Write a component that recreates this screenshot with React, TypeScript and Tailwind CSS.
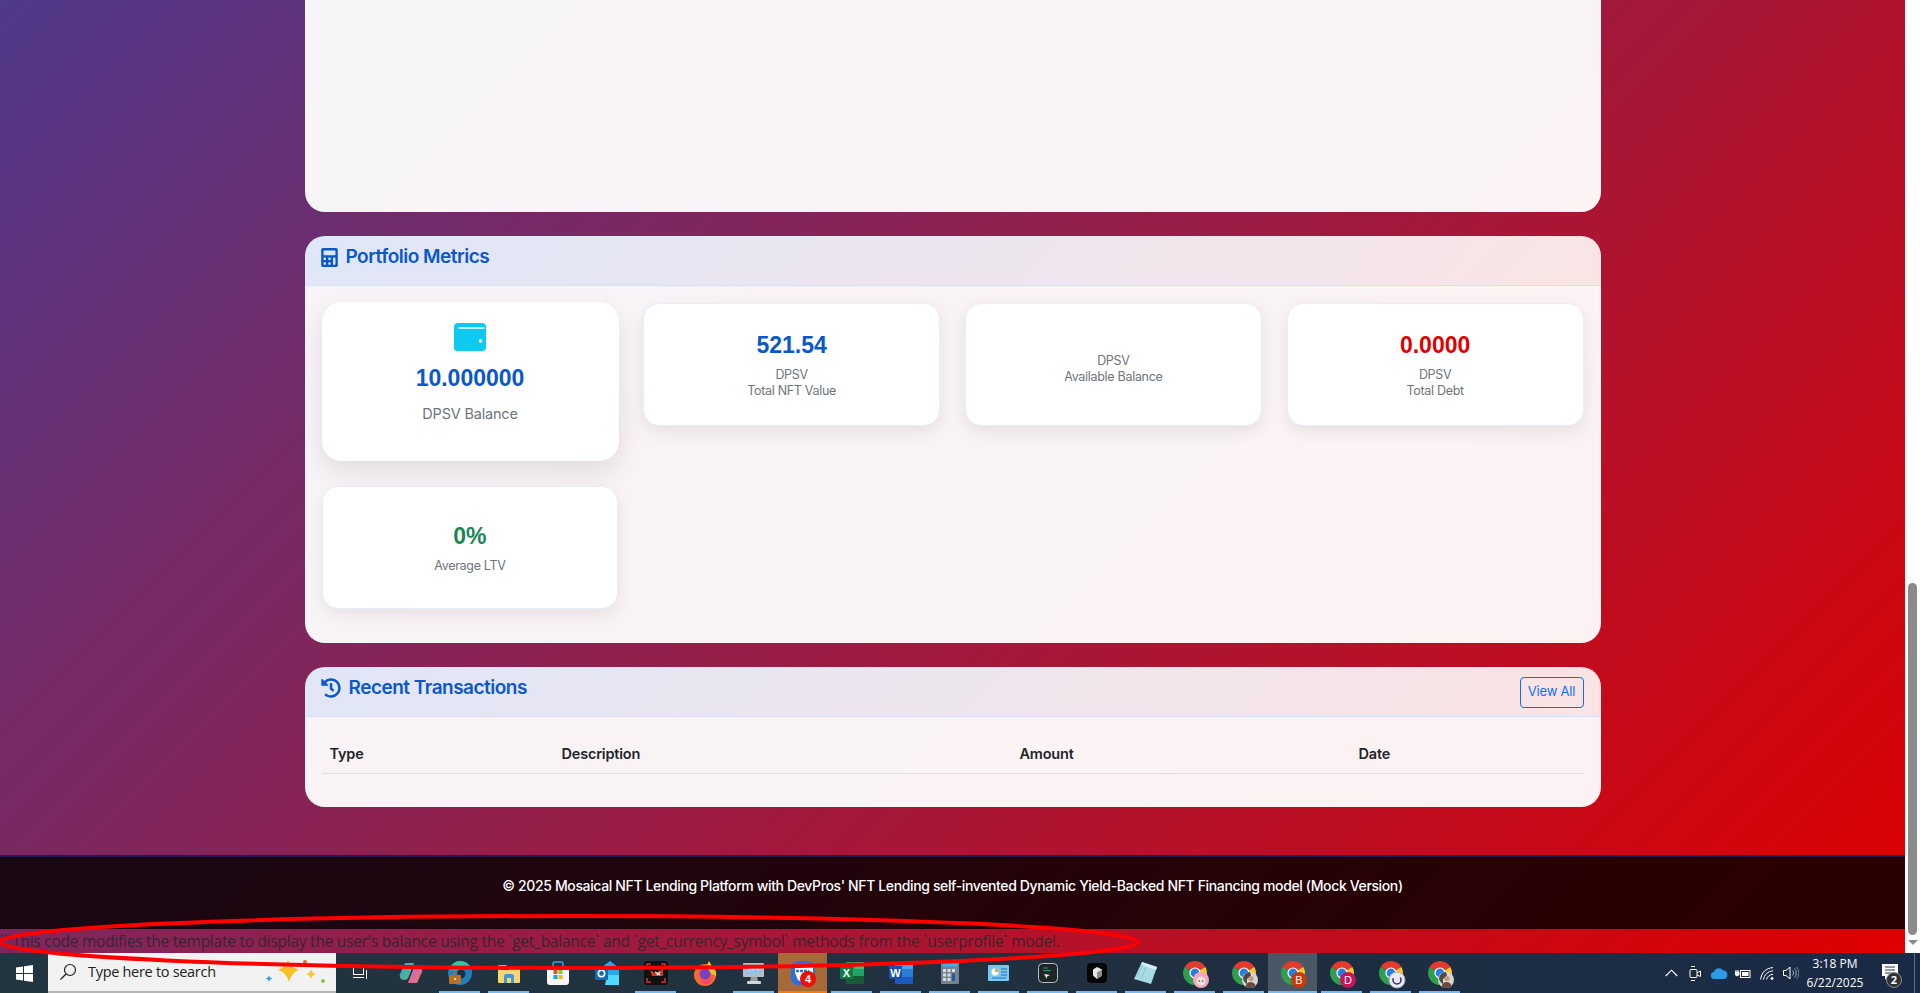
// App.tsx
import React from 'react';
import { FaCalculator, FaHistory } from 'react-icons/fa';

const inter = "[font-family:Inter,sans-serif]";

function MetricCard({ value, unit, label, color }: { value?: string; unit?: string; label: string; color?: string }) {
  return (
    <div className={`mt-px flex h-[123px] w-full flex-col items-center justify-center rounded-2xl border border-[#e7edf9] bg-white text-center shadow-[0_6px_18px_rgba(0,0,0,0.08)] ${value ? '' : 'pt-2'}`}>
      {value && <div className={`${color} mb-[7px] text-[23px] leading-[29px] font-bold [font-family:'Liberation_Sans',sans-serif]`}>{value}</div>}
      {unit && <div className="text-[12.5px] leading-4 tracking-[-0.3px] text-[#6c757d]">{unit}</div>}
      <div className="text-[12.5px] leading-4 tracking-[-0.3px] text-[#6c757d]">{label}</div>
    </div>
  );
}

function Chrome({ children }: { children: React.ReactNode }) {
  return (
    <svg width="24" height="24" viewBox="0 0 24 24" className="overflow-visible">
      <path d="M12 12L1.61 6A12 12 0 0 1 22.39 6Z" fill="#e33b2e" />
      <path d="M12 12L22.39 6A12 12 0 0 1 12 24Z" fill="#fbc62d" />
      <path d="M12 12L12 24A12 12 0 0 1 1.61 6Z" fill="#2f9e4f" />
      <circle cx="12" cy="12" r="5.6" fill="#fff" />
      <circle cx="12" cy="12" r="4.4" fill="#2a7de1" />
      {children}
    </svg>
  );
}

function Person() {
  return (
    <g>
      <circle cx="18" cy="19" r="8" fill="#d8d4d0" />
      <path d="M11 17a7 7 0 0 1 7-6l1 4-4 3v5a8 8 0 0 1-4-6z" fill="#4a4a4a" />
      <circle cx="19" cy="17.5" r="2.6" fill="#c79a80" />
      <path d="M13.5 26c.5-3.5 2.500-5 5-5s4.500 1.500 5 3.500a8 8 0 0 1-10 1.500z" fill="#6b4a3e" />
    </g>
  );
}

function TaskItem({ children, running, tone }: { children: React.ReactNode; running?: boolean; tone?: 'orange' | 'gray' }) {
  return (
    <div className={`relative flex h-10 w-[49px] items-center justify-center ${tone === 'orange' ? 'bg-[#a66a38]' : ''} ${tone === 'gray' ? 'bg-[#4a5866]' : ''}`}>
      {children}
      {running && !tone && <span className="absolute bottom-0 left-1 right-1 h-0.5 bg-[#76b9ed]" />}
      {tone === 'orange' && <span className="absolute inset-x-0 bottom-0 h-0.5 bg-[#f77a0c]" />}
      {tone === 'gray' && <span className="absolute inset-x-0 bottom-0 h-0.5 bg-[#76b9ed]" />}
    </div>
  );
}

function Taskbar() {
  return (
    <div className={`flex h-10 shrink-0 items-center bg-[linear-gradient(90deg,#223540,#20303f_55%,#1a2a46)] text-white`}>
      <div className="flex h-10 w-12 items-center justify-center">
        <svg width="17" height="17" viewBox="0 0 17 17" fill="#fff">
          <path d="M0 2.400 7 1.400V8H0zM8 1.200 17 0V8H8zM0 9h7v6.600L0 14.600zM8 9h9v8l-9-1.200z" />
        </svg>
      </div>
      <div className="flex h-10 w-[288px] items-center border-b-2 border-[#b5b5b5] bg-[#f2f2f2]">
        <svg width="18" height="18" viewBox="0 0 18 18" fill="none" stroke="#1f1f1f" strokeWidth="1.200" className="ml-[11px]">
          <circle cx="11" cy="7" r="5.500" />
          <path d="M7 11 1.500 16.500" />
        </svg>
        <span className="ml-[11px] text-[14.5px] tracking-[-0.3px] text-[#222] [font-family:'Open_Sans',sans-serif]">Type here to search</span>
        <svg width="70" height="40" viewBox="0 0 70 40" className="ml-auto mr-1">
          <path d="M26 7c1 6 4 8 11 11-5 2-8 5-10 12-2-7-5-10-11-12 6-3 9-5 10-11z" fill="#fbbf1f" />
          <path d="M49 17c.5 3 2 4 5 5-3 1-4 2.500-5 5-1-2.500-2-4-5-5 3-1 4.500-2 5-5z" fill="#fcc437" />
          <path d="M7 23c.3 2 1.200 3 3.500 3.500-2.300.8-3 1.700-3.500 3.500-.5-1.800-1.200-2.700-3.500-3.500 2.300-.5 3.200-1.500 3.500-3.500z" fill="#2ea4f0" />
          <circle cx="61" cy="29" r="2" fill="#8ac640" />
          <circle cx="43" cy="10" r="2" fill="#e8663a" />
        </svg>
      </div>

      <div className="flex h-10 w-[50px] items-center justify-center">
        <svg width="16" height="12" viewBox="0 0 16 12" fill="none" stroke="#fff" strokeWidth="1">
          <rect x="0.500" y="0.500" width="10" height="7" />
          <path d="M0 10.500h11M13.500 0v1M13.500 3v9" />
        </svg>
      </div>
      <TaskItem>
        <svg width="24" height="22" viewBox="0 0 24 22">
          <defs>
            <linearGradient id="cp1" x1="0" y1="0" x2="1" y2="1"><stop offset="0" stopColor="#3a9fdc" /><stop offset="1" stopColor="#5fbf6a" /></linearGradient>
            <linearGradient id="cp2" x1="0" y1="0" x2="1" y2="1"><stop offset="0" stopColor="#c56ae0" /><stop offset="1" stopColor="#f0705a" /></linearGradient>
          </defs>
          <path d="M6 1h9l-5 13c-1 3-3 4-5 4-3 0-5-3-4-6z" fill="url(#cp1)" />
          <path d="M18 21H9l5-13c1-3 3-4 5-4 3 0 5 3 4 6z" fill="url(#cp2)" />
        </svg>
      </TaskItem>
      <TaskItem running>
        <svg width="24" height="24" viewBox="0 0 24 24">
          <circle cx="12" cy="12" r="12" fill="#1f7fb8" />
          <path d="M1 9C3 3 8 0 12 0c6 0 11 4 12 10-3-3-8-3-11-1-3 1-7 1-12 0z" fill="#37c6a0" />
          <circle cx="13" cy="13" r="4.500" fill="#1c2f3e" />
          <rect x="1" y="14" width="12" height="9" rx="1" fill="#b5722a" />
          <rect x="5" y="12" width="4" height="3" fill="none" stroke="#b5722a" />
          <rect x="6" y="17" width="2" height="2" fill="#f2cf7a" />
        </svg>
      </TaskItem>
      <TaskItem running>
        <svg width="22" height="19" viewBox="0 0 22 19">
          <path d="M0 2a1 1 0 0 1 1-1h7l2 2h11a1 1 0 0 1 1 1v3H0z" fill="#e5a33b" />
          <path d="M0 5h22v13a1 1 0 0 1-1 1H1a1 1 0 0 1-1-1z" fill="#f8d672" />
          <path d="M6 19v-7a2 2 0 0 1 2-2h6a2 2 0 0 1 2 2v7h-3v-5H9v5z" fill="#3d9bdc" />
        </svg>
      </TaskItem>
      <TaskItem>
        <svg width="24" height="24" viewBox="0 0 24 24">
          <path d="M7 7V3a2 2 0 0 1 2-2h6a2 2 0 0 1 2 2v4" fill="none" stroke="#27a9e6" strokeWidth="1.500" />
          <path d="M1 6h22v15a3 3 0 0 1-3 3H4a3 3 0 0 1-3-3z" fill="#f6f6f6" />
          <rect x="7.500" y="9" width="4" height="4" fill="#f1511b" />
          <rect x="12.500" y="9" width="4" height="4" fill="#80cc28" />
          <rect x="7.500" y="14" width="4" height="4" fill="#00adef" />
          <rect x="12.500" y="14" width="4" height="4" fill="#fbbc09" />
        </svg>
      </TaskItem>
      <TaskItem>
        <svg width="24" height="24" viewBox="0 0 24 24">
          <path d="M7 6 15 0l9 7v12H7z" fill="#28a8ea" />
          <path d="M12 14h12v10H10z" fill="#50d9ff" />
          <rect x="0" y="6" width="13" height="13" rx="1" fill="#0f6cbd" />
          <circle cx="6.500" cy="12.500" r="3.200" fill="none" stroke="#fff" strokeWidth="1.600" />
        </svg>
      </TaskItem>
      <TaskItem running>
        <svg width="24" height="24" viewBox="0 0 24 24">
          <rect width="24" height="24" rx="3" fill="#111" />
          <path d="M3 7V3h4M17 3h4v4M21 17v4h-4M7 21H3v-4" fill="none" stroke="#d3322f" strokeWidth="1.500" />
          <path d="M6 9l5 3 8-4v7H8z" fill="#d3322f" />
          <path d="M11 11l5 3M16 11l-3 3" stroke="#fff" strokeWidth="1.200" />
        </svg>
      </TaskItem>
      <TaskItem>
        <svg width="24" height="25" viewBox="0 0 24 25">
          <circle cx="12" cy="14" r="11" fill="#f76a2c" />
          <path d="M3 6c1 1 2 1 3 1 3-3 6-3 8-3l2-4 3 5c3 3 5 6 4 10L12 9z" fill="#fbbf24" />
          <circle cx="12" cy="13" r="5.500" fill="#7a3fc4" />
          <path d="M7 18c4 3 10 2 13-3-1 6-6 9-10 8z" fill="#f6417a" />
        </svg>
      </TaskItem>
      <TaskItem running>
        <svg width="23" height="22" viewBox="0 0 23 22">
          <rect x="1" y="1" width="21" height="14" rx="1" fill="#b9bdbf" />
          <rect x="4" y="3.500" width="15" height="9" fill="#8fc4e8" />
          <path d="M6 9l3-3 2 2 2-3 4 4" fill="none" stroke="#eef" strokeWidth="1" />
          <path d="M9 15h6l1 4H8z" fill="#9a9ea0" />
          <rect x="5" y="19" width="14" height="3" rx="1" fill="#d4d6d7" />
        </svg>
      </TaskItem>
      <TaskItem tone="orange">
        <svg width="24" height="24" viewBox="0 0 24 24" className="overflow-visible">
          <rect width="24" height="24" rx="7" fill="#2a6fdb" />
          <path d="M4 3h16a2 2 0 0 1 2 2v12c-4 5-11 5-15 2L4 12z" fill="#fff" />
          <path d="M5 10h13" stroke="#2a6fdb" strokeWidth="2.500" strokeDasharray="3 1" />
          <circle cx="17" cy="18" r="8" fill="#f20d0d" />
          <text x="17" y="22" textAnchor="middle" fontSize="11" fontWeight="700" fill="#fff" fontFamily="Liberation Sans, sans-serif">4</text>
        </svg>
      </TaskItem>
      <TaskItem running>
        <svg width="24" height="22" viewBox="0 0 24 22">
          <rect x="6" y="0" width="18" height="22" fill="#21a366" />
          <rect x="15" y="0" width="9" height="7" fill="#33c481" />
          <rect x="6" y="14" width="18" height="8" fill="#185c37" />
          <rect x="0" y="4" width="13" height="13" fill="#107c41" />
          <text x="6.500" y="14.500" textAnchor="middle" fontSize="11" fontWeight="700" fill="#fff" fontFamily="Liberation Sans, sans-serif">X</text>
        </svg>
      </TaskItem>
      <TaskItem running>
        <svg width="24" height="22" viewBox="0 0 24 22">
          <rect x="6" y="0" width="18" height="7" fill="#41a5ee" />
          <rect x="6" y="7" width="18" height="8" fill="#2b7cd3" />
          <rect x="6" y="15" width="18" height="7" fill="#185abd" />
          <rect x="0" y="4" width="13" height="13" fill="#1e4fae" />
          <text x="6.500" y="14.500" textAnchor="middle" fontSize="11" fontWeight="700" fill="#fff" fontFamily="Liberation Sans, sans-serif">W</text>
        </svg>
      </TaskItem>
      <TaskItem running>
        <svg width="18" height="22" viewBox="0 0 18 22">
          <rect width="18" height="22" rx="1" fill="#75838f" />
          <rect x="2" y="1.500" width="14" height="3" fill="#3fb0e6" />
          <path d="M2 7h3v3H2zM6.500 7h3v3h-3zM11 7h3v3h-3zM2 11.500h3v3H2zM6.500 11.500h3v3h-3zM2 16h3v3H2zM6.500 16h3v3h-3z" fill="#d8dee2" />
          <rect x="11" y="11.500" width="3" height="7.500" fill="#1f5f9e" />
        </svg>
      </TaskItem>
      <TaskItem running>
        <svg width="21" height="16" viewBox="0 0 21 16">
          <rect width="21" height="16" rx="1" fill="#7cc7f2" />
          <circle cx="7" cy="7" r="3.500" fill="#fff" />
          <path d="M7 7V3.500A3.500 3.500 0 0 1 10.500 7z" fill="#f0a02c" />
          <path d="M13 4h6M13 7h6M13 10h6M4 13h14" stroke="#1f6fb5" strokeWidth="1" />
        </svg>
      </TaskItem>
      <TaskItem running>
        <svg width="20" height="20" viewBox="0 0 20 20">
          <rect x="0.500" y="0.500" width="19" height="19" rx="4" fill="#1f2426" stroke="#b9bfc2" />
          <path d="M5 5h5M5 7.500h8" stroke="#2f8f6f" strokeWidth="1" />
          <path d="M6 11l6 1-3 1.500V16z" fill="#e8ecee" />
        </svg>
      </TaskItem>
      <TaskItem running>
        <svg width="20" height="20" viewBox="0 0 20 20">
          <rect width="20" height="20" rx="4" fill="#050505" />
          <path d="M10 4l5 2.500v6L10 16l-4-3.500v-6z" fill="#e6e6e6" />
          <path d="M10 9.500 15 6.500v6L10 16z" fill="#8a8a8a" />
        </svg>
      </TaskItem>
      <TaskItem running>
        <svg width="23" height="22" viewBox="0 0 23 22">
          <path d="M8 0 23 5l-6 17L0 17z" fill="#a8dbe4" />
          <path d="M8 0 23 5l-1 3L7 3z" fill="#d5eef2" />
          <path d="M3 15 9 3M7 17l5-12" stroke="#7fbcc8" strokeWidth="0.800" />
        </svg>
      </TaskItem>
      <TaskItem running>
        <Chrome>
          <circle cx="18" cy="19" r="8" fill="#f3a6bd" />
          <circle cx="18" cy="20" r="4.500" fill="#fbe3d8" />
          <circle cx="16.300" cy="20" r="0.900" fill="#2d8f9e" />
          <circle cx="19.700" cy="20" r="0.900" fill="#2d8f9e" />
        </Chrome>
      </TaskItem>
      <TaskItem running><Chrome><Person /></Chrome></TaskItem>
      <TaskItem tone="gray">
        <Chrome>
          <circle cx="18" cy="19" r="8" fill="#c43c0c" />
          <text x="18" y="23" textAnchor="middle" fontSize="11" fill="#fff" fontFamily="Liberation Sans, sans-serif">B</text>
        </Chrome>
      </TaskItem>
      <TaskItem running>
        <Chrome>
          <circle cx="18" cy="19" r="8" fill="#c2185b" />
          <text x="18" y="23" textAnchor="middle" fontSize="11" fill="#fff" fontFamily="Liberation Sans, sans-serif">D</text>
        </Chrome>
      </TaskItem>
      <TaskItem running>
        <Chrome>
          <circle cx="18" cy="19" r="8" fill="#e9e9f2" stroke="#a8a8b0" />
          <circle cx="18" cy="19" r="4" fill="none" stroke="#2c2f6e" strokeWidth="1.500" strokeDasharray="14 8" />
        </Chrome>
      </TaskItem>
      <TaskItem running><Chrome><Person /></Chrome></TaskItem>

      <div className="ml-auto flex h-10 items-center">
        <span className="flex w-6 justify-center">
          <svg width="13" height="8" viewBox="0 0 13 8" fill="none" stroke="#fff" strokeWidth="1.100"><path d="M.7 7 6.500 1.200 12.300 7" /></svg>
        </span>
        <span className="flex w-6 justify-center">
          <svg width="12" height="17" viewBox="0 0 12 17" fill="none" stroke="#fff" strokeWidth="1"><rect x="1" y="4.500" width="7" height="8" rx="1" /><path d="M8 8l3.500-2v5.500L8 10M2 1.500h4M2 15.500h4" /></svg>
        </span>
        <span className="flex w-6 justify-center">
          <svg width="17" height="11" viewBox="0 0 17 11"><path d="M3.500 11a3.500 3.500 0 0 1-.5-7A5 5 0 0 1 12 2.500 4.300 4.300 0 0 1 13 11z" fill="#2b9be6" /></svg>
        </span>
        <span className="flex w-6 justify-center">
          <svg width="16" height="11" viewBox="0 0 16 11"><rect x="5.500" y="2.500" width="9.500" height="7" fill="none" stroke="#fff" /><rect x="7" y="4" width="6.500" height="4" fill="#fff" /><path d="M0 5.500h2M1 2v2M3 2v2M0 4h4v2.500L2.500 8H2L0 6.500z" stroke="#fff" strokeWidth="1" fill="#fff" /></svg>
        </span>
        <span className="flex w-6 justify-center">
          <svg width="14" height="13" viewBox="0 0 14 13" fill="none" stroke="#fff" strokeWidth="1"><path d="M.7 12.500C1 6 6 1 13 .6M3.500 12.500C4 8 8 4.200 13 3.800M6.500 12.500C7 10 9.500 7.500 13 7.200" /><circle cx="12" cy="11.500" r="1" fill="#fff" /></svg>
        </span>
        <span className="flex w-6 justify-center">
          <svg width="16" height="14" viewBox="0 0 16 14" fill="none" stroke="#fff" strokeWidth="1"><path d="M.5 4.500h2.500L7 1v12L3 9.500H.5z" /><path d="M9.500 4.500a3.500 3.500 0 0 1 0 5M11.500 2.500a6.500 6.500 0 0 1 0 9" stroke="#9fb0bd" /><path d="M13.500 1a9 9 0 0 1 0 12" stroke="#6f8090" /></svg>
        </span>
        <div className="flex w-16 flex-col items-center text-[12px] leading-[19px] [font-family:'Open_Sans',sans-serif]">
          <span>3:18 PM</span>
          <span>6/22/2025</span>
        </div>
        <div className="relative box-content flex h-10 w-[47px] items-center justify-center border-r border-[#5a6b80]">
          <svg width="16" height="16" viewBox="0 0 16 16" className="-translate-x-[1px] -translate-y-[1px]">
            <path d="M0 0h16v12H6l-3 4v-4H0z" fill="#fff" />
            <path d="M3 3h10M3 6h10M3 9h7" stroke="#24344a" strokeWidth="1" />
          </svg>
          <span className="absolute left-[19px] top-[19px] flex h-4 w-4 items-center justify-center rounded-full border border-[#8b8f96] bg-[#2e3236] text-[11px] font-bold [font-family:'Open_Sans',sans-serif]">2</span>
        </div>
        <div className="w-[5px]" />
      </div>
    </div>
  );
}

export default function App() {
  return (
    <div className={`relative flex h-screen flex-col overflow-hidden ${inter}`}>
      <div className="flex min-h-0 flex-1">
        <div className="flex min-w-0 flex-1 flex-col bg-[linear-gradient(135deg,#50398b,#e00000)]">
          <main className="mx-auto flex w-[1296px] flex-1 flex-col gap-6">
            {/* top card, scrolled almost out of view */}
            <div className="h-[212px] shrink-0 rounded-b-[20px] bg-white/95" />

            {/* Portfolio Metrics */}
            <section className="h-[407px] shrink-0 overflow-hidden rounded-[20px] bg-white/95">
              <div className="flex h-[50px] items-center gap-2 border-b border-[#d6dff5] bg-[linear-gradient(135deg,rgba(13,110,253,0.1),rgba(230,60,50,0.08))] pl-4">
                <FaCalculator className="mb-[7px] h-[19px] w-[17px] text-[#0a58ca]" />
                <h2 className="mb-[7px] text-[19px] font-semibold tracking-[-0.5px] text-[#0a58ca]">Portfolio Metrics</h2>
              </div>
              <div className="grid grid-cols-4 items-start gap-x-[25px] gap-y-[24px] px-[17px] pt-4">
                <div className="flex h-[159px] w-[297px] flex-col items-center rounded-[20px] bg-white pt-[19px] shadow-[0_10px_28px_rgba(0,0,0,0.1)]">
                  <svg width="32" height="28" viewBox="0 0 32 28" className="mt-[2px]">
                    <path d="M4 0h24a4 4 0 0 1 4 4v20a4 4 0 0 1-4 4H3a3 3 0 0 1-3-3V4a4 4 0 0 1 4-4z" fill="#0dcaf0" />
                    <path d="M5 5h25" stroke="#fff" strokeWidth="1.500" strokeLinecap="round" />
                    <circle cx="26.500" cy="18" r="1.800" fill="#fff" />
                  </svg>
                  <div className="mt-[13px] text-[23px] leading-[29px] font-bold text-[#0a58ca] [font-family:'Liberation_Sans',sans-serif]">10.000000</div>
                  <div className="mt-[10px] text-[14.5px] tracking-[-0.2px] text-[#6c757d]">DPSV Balance</div>
                </div>
                <MetricCard value="521.54" unit="DPSV" label="Total NFT Value" color="text-[#0a58ca]" />
                <MetricCard unit="DPSV" label="Available Balance" />
                <MetricCard value="0.0000" unit="DPSV" label="Total Debt" color="text-[#e00000]" />
                <MetricCard value="0%" label="Average LTV" color="text-[#198754]" />
              </div>
            </section>

            {/* Recent Transactions */}
            <section className="h-[140px] shrink-0 overflow-hidden rounded-[20px] bg-white/95">
              <div className="flex h-[50px] items-center border-b border-[#d6dff5] bg-[linear-gradient(135deg,rgba(13,110,253,0.1),rgba(230,60,50,0.08))] pl-4 pr-[17px]">
                <FaHistory className="mb-[7px] h-5 w-5 text-[#0a58ca]" />
                <h2 className="mb-[7px] ml-2 text-[19px] font-semibold tracking-[-0.5px] text-[#0a58ca]">Recent Transactions</h2>
                <button className="ml-auto mt-px h-[31px] w-16 rounded border border-[#0d6efd] text-[13px] tracking-[-0.2px] text-[#0d6efd]">View All</button>
              </div>
              <div className="px-[17px] pt-[17px]">
                <div className="grid h-10 grid-cols-[232px_458px_339px_1fr] items-center border-b border-[#e0dee2] text-[14.5px] font-semibold tracking-[-0.2px] text-[#212529]">
                  <div className="px-2">Type</div>
                  <div className="px-2">Description</div>
                  <div className="px-2">Amount</div>
                  <div className="px-2">Date</div>
                </div>
              </div>
            </section>
          </main>

          <footer className="h-[74px] shrink-0 border-t-2 border-[#1c1c50] bg-black/80 pt-[18px] text-center text-[14px] font-medium tracking-[-0.37px] text-white">
            © 2025 Mosaical NFT Lending Platform with DevPros' NFT Lending self-invented Dynamic Yield-Backed NFT Financing model (Mock Version)
          </footer>
          <p className="h-6 shrink-0 whitespace-nowrap text-[15.5px] leading-6 tracking-[-0.25px] text-[#212529]/80 [font-family:'Open_Sans',sans-serif]">```This code modifies the template to display the user's balance using the `get_balance` and `get_currency_symbol` methods from the `userprofile` model.</p>
        </div>

        {/* page scrollbar */}
        <div className="flex w-[15px] shrink-0 flex-col items-center bg-white">
          <div className="h-[583px]" />
          <div className="h-[352px] w-[9px] rounded-full bg-[#8b8b8b]" />
          <div className="mt-[5px] h-0 w-0 border-x-[5px] border-t-[5px] border-x-transparent border-t-[#8b8b8b]" />
        </div>
      </div>

      <Taskbar />

      {/* hand drawn annotation over the page */}
      <svg className="pointer-events-none absolute left-0 top-[910px] h-[65px] w-[1145px]" viewBox="0 0 1145 65" fill="none">
        <ellipse cx="569" cy="32" rx="569" ry="26" stroke="#ff0000" strokeWidth="4" />
      </svg>
    </div>
  );
}
